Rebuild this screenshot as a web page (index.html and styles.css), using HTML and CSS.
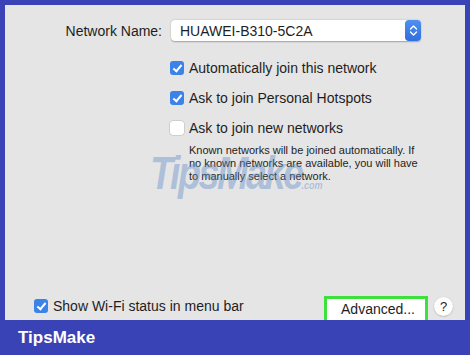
FILE: index.html
```html
<!DOCTYPE html>
<html lang="en">
<head>
  <meta charset="UTF-8" />
  <title>Wi-Fi Network Settings</title>
  <link rel="stylesheet" href="styles.css">
</head>
<body>
  <div class="panel">
    <div class="name-row">
      <label class="name-label" for="network">Network Name:</label>
      <div class="select">
        <span class="select-value">HUAWEI-B310-5C2A</span>
        <span class="stepper">
          <svg width="9" height="13" viewBox="0 0 9 13">
            <path d="M1.5 5 L4.5 2 L7.5 5 M1.5 8 L4.5 11 L7.5 8" fill="none" stroke="#fff" stroke-width="1.4" stroke-linecap="round" stroke-linejoin="round"/>
          </svg>
        </span>
      </div>
    </div>

    <div class="options">
      <div class="check-row">
        <span class="box checked"></span>
        <span>Automatically join this network</span>
      </div>
      <div class="check-row">
        <span class="box checked"></span>
        <span>Ask to join Personal Hotspots</span>
      </div>
      <div class="check-row">
        <span class="box"></span>
        <span>Ask to join new networks</span>
      </div>
      <p class="hint">Known networks will be joined automatically. If no known networks are available, you will have to manually select a network.</p>
    </div>

    <div class="bottom-row">
      <div class="check-row">
        <span class="box checked"></span>
        <span>Show Wi-Fi status in menu bar</span>
      </div>
      <div class="actions">
        <button class="advanced">Advanced...</button>
        <span class="help">?</span>
      </div>
    </div>

    <div class="watermark">TipsMake<span class="wm-com">.com</span></div>
  </div>

  <div class="footer">TipsMake</div>
</body>
</html>
```

FILE: styles.css
```css
body {
  margin: 0;
  background: #3a43b6;
  font-family: "Liberation Sans", Arial, sans-serif;
  color: #1e1e1e;
  width: 470px;
  height: 355px;
  overflow: hidden;
}

.panel {
  position: relative;
  margin: 5px 5px 0 5px;
  height: 315px;
  background: #e5e5e5;
  display: flex;
  flex-direction: column;
  box-sizing: border-box;
  padding-top: 15px;
}

/* Network name row */
.name-row {
  display: flex;
  align-items: center;
}

.name-label {
  width: 166px;
  text-align: right;
  font-size: 14px;
  padding-right: 9px;
  box-sizing: border-box;
}

.select {
  width: 250px;
  height: 21px;
  background: #fff;
  border-radius: 4px;
  box-shadow: 0 0.5px 1.5px rgba(0, 0, 0, 0.3);
  display: flex;
  align-items: center;
  justify-content: space-between;
}

.select-value {
  font-size: 14px;
  padding-left: 9px;
}

.stepper {
  width: 16px;
  height: 21px;
  background: linear-gradient(#4f8ff0, #2f6fe0);
  border-radius: 4px;
  display: flex;
  align-items: center;
  justify-content: center;
}

/* Checkbox rows */
.options {
  padding-left: 165px;
  padding-top: 19px;
}

.check-row {
  display: flex;
  align-items: center;
  height: 16px;
  font-size: 14px;
  margin-bottom: 14px;
}

.box {
  width: 14px;
  height: 14px;
  border-radius: 3px;
  background: #fff;
  box-shadow: 0 0 0 0.5px rgba(0, 0, 0, 0.2);
  margin-right: 5px;
  position: relative;
  flex-shrink: 0;
}

.box.checked {
  background: #3b83e8;
  box-shadow: none;
}

.box.checked::after {
  content: "";
  position: absolute;
  left: 4.5px;
  top: 1.5px;
  width: 3px;
  height: 7px;
  border: solid #fff;
  border-width: 0 2px 2px 0;
  transform: rotate(40deg);
}

.hint {
  margin: -6px 0 0 19px;
  width: 235px;
  font-size: 11px;
  line-height: 13px;
}

/* Bottom row */
.bottom-row {
  margin-top: auto;
  display: flex;
  justify-content: space-between;
  align-items: flex-end;
  padding-left: 29px;
}

.bottom-row .check-row {
  margin-bottom: 6px;
}

.actions {
  display: flex;
  align-items: center;
  padding-right: 12px;
}

.advanced {
  width: 104px;
  height: 24px;
  border: 3px solid #3ee13c;
  border-bottom: none;
  background: #fff;
  font-family: "Liberation Sans", Arial, sans-serif;
  font-size: 14px;
  color: #1e1e1e;
  padding: 0 0 2px 4px;
  margin-right: 6px;
}

.help {
  width: 19px;
  height: 19px;
  border-radius: 50%;
  background: #fdfdfd;
  box-shadow: 0 0.5px 1.5px rgba(0, 0, 0, 0.25);
  font-size: 13px;
  display: flex;
  align-items: center;
  justify-content: center;
  margin-bottom: 3px;
}

/* Watermark overlay */
.watermark {
  position: absolute;
  left: 145px;
  top: 141px;
  font-size: 46px;
  font-weight: bold;
  font-style: italic;
  color: rgba(95, 140, 200, 0.42);
  letter-spacing: -3px;
  transform: scaleX(0.82);
  transform-origin: left center;
  pointer-events: none;
}

.wm-com {
  font-size: 11px;
  letter-spacing: 0;
}

.footer {
  height: 35px;
  display: flex;
  align-items: center;
  padding-left: 18px;
  color: #fff;
  font-weight: bold;
  font-size: 17px;
}
```
